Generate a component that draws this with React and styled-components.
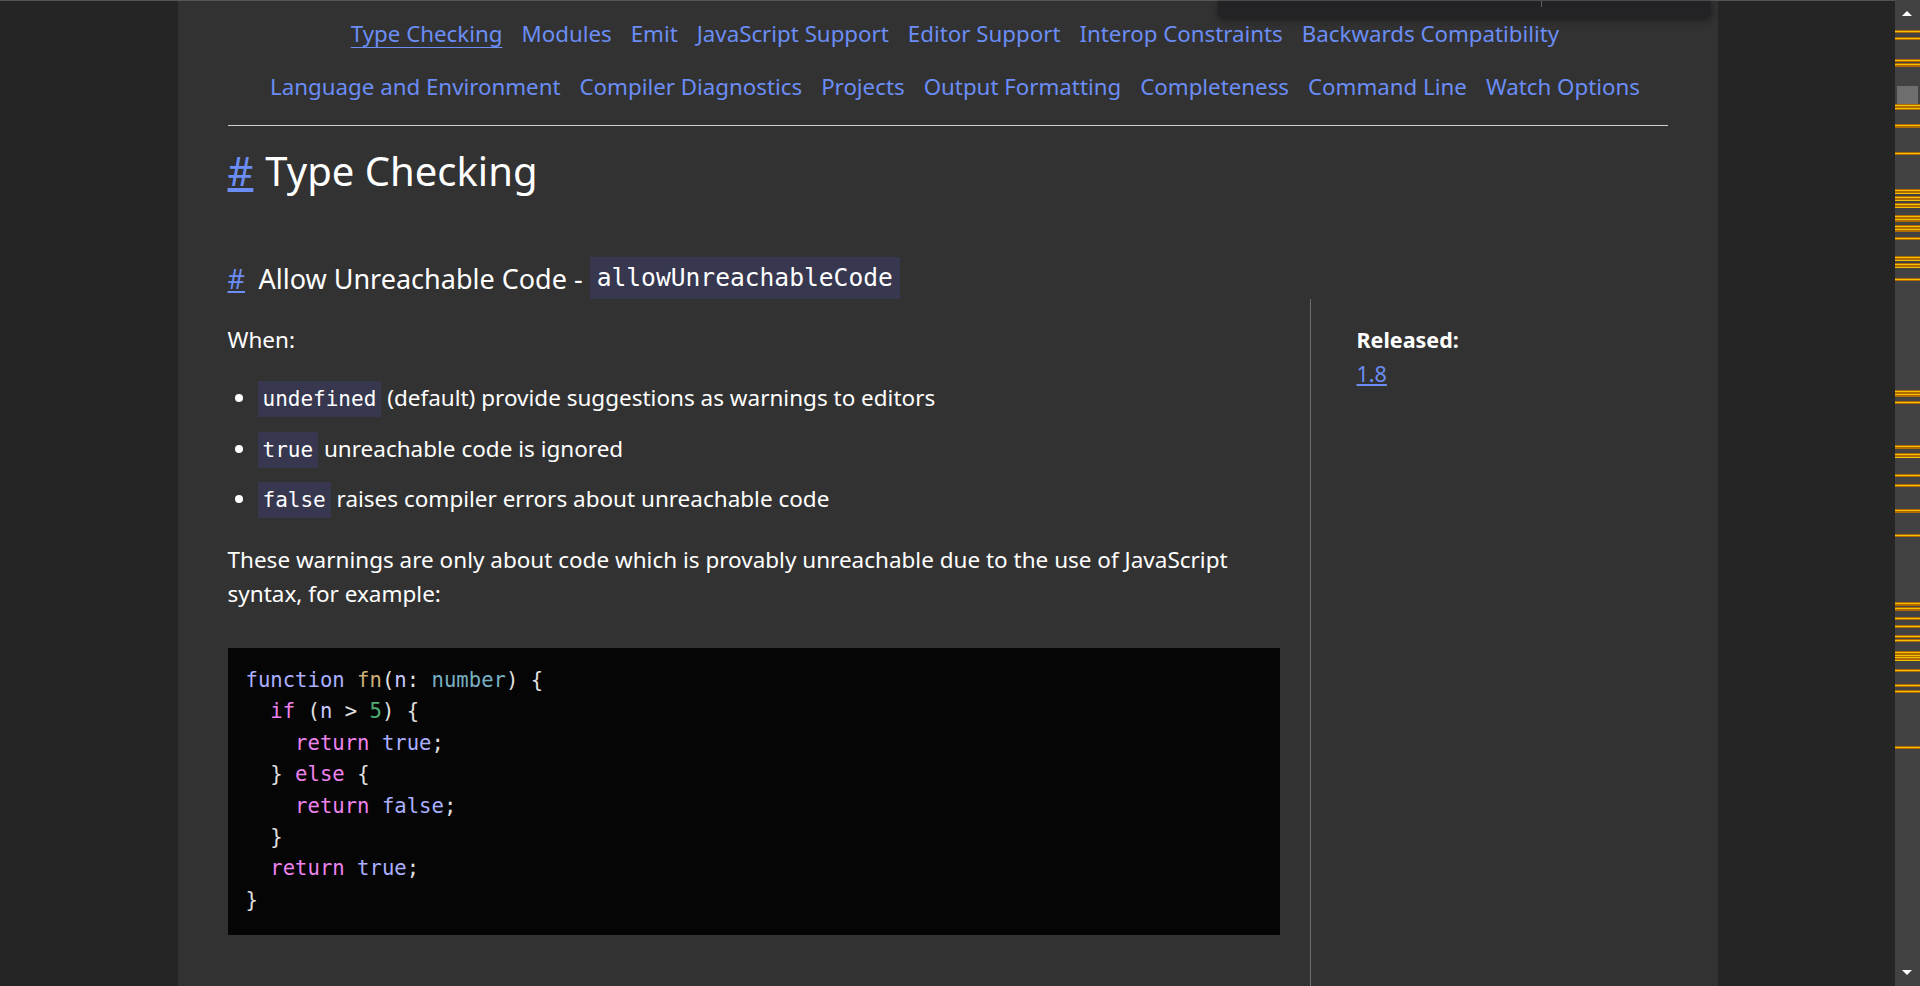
import styled, { createGlobalStyle } from "styled-components";

const GlobalStyle = createGlobalStyle`
  html, body {
    margin: 0;
    padding: 0;
    height: 100%;
    overflow: hidden;
    background-color: #252525;
  }
  body {
    font-family: "Noto Sans", "Open Sans", sans-serif;
    color: #ffffff;
  }
  * {
    box-sizing: border-box;
  }
`;

const navRows = [
  [
    "Type Checking",
    "Modules",
    "Emit",
    "JavaScript Support",
    "Editor Support",
    "Interop Constraints",
    "Backwards Compatibility",
  ],
  [
    "Language and Environment",
    "Compiler Diagnostics",
    "Projects",
    "Output Formatting",
    "Completeness",
    "Command Line",
    "Watch Options",
  ],
];

// scrollbar search markers: [top, height]
const markers = [
  [30, 3], [37, 3], [59, 3], [63, 4], [104, 6], [124, 4], [152, 3],
  [189, 5], [196, 5], [203, 5], [215, 7], [225, 7], [237, 3], [256, 5],
  [263, 5], [278, 3], [390, 7], [401, 3], [445, 4], [453, 5], [474, 3],
  [484, 3], [509, 4], [534, 3], [602, 4], [607, 4], [617, 3], [625, 3],
  [635, 3], [639, 3], [651, 7], [656, 5], [669, 3], [684, 3], [690, 3],
  [746, 3],
];

const App = () => {
  return (
    <>
      <GlobalStyle />
      <Page>
        <Viewport>
          <Main>
            <Nav>
              {navRows.map((row, i) => (
                <NavRow key={i}>
                  {row.map((item) => (
                    <NavLink key={item} $active={item === "Type Checking"}>
                      {item}
                    </NavLink>
                  ))}
                </NavRow>
              ))}
            </Nav>
            <Rule />
            <H1>
              <Anchor>#</Anchor>
              <span>Type Checking</span>
            </H1>
            <H2>
              <Anchor>#</Anchor>
              <span>Allow Unreachable Code - </span>
              <HeadCode>allowUnreachableCode</HeadCode>
            </H2>
            <Section>
              <Body>
                <Para>When:</Para>
                <List>
                  <Item>
                    <Code>undefined</Code> (default) provide suggestions as warnings to editors
                  </Item>
                  <Item>
                    <Code>true</Code> unreachable code is ignored
                  </Item>
                  <Item>
                    <Code>false</Code> raises compiler errors about unreachable code
                  </Item>
                </List>
                <Para>
                  These warnings are only about code which is provably unreachable due to the use of JavaScript
                  syntax, for example:
                </Para>
                <Pre>
                  <Line>
                    <Tok $c="#aab0ff">function</Tok> <Tok $c="#cdb077">fn</Tok>(<Tok $c="#c9c9ff">n</Tok>: <Tok $c="#79b0c2">number</Tok>) {"{"}
                  </Line>
                  <Line $indent={1}>
                    <Tok $c="#ee82ee">if</Tok> (<Tok $c="#c9c9ff">n</Tok> &gt; <Tok $c="#4fae72">5</Tok>) {"{"}
                  </Line>
                  <Line $indent={2}>
                    <Tok $c="#ee82ee">return</Tok> <Tok $c="#aab0ff">true</Tok>;
                  </Line>
                  <Line $indent={1}>
                    {"} "}<Tok $c="#ee82ee">else</Tok> {"{"}
                  </Line>
                  <Line $indent={2}>
                    <Tok $c="#ee82ee">return</Tok> <Tok $c="#aab0ff">false</Tok>;
                  </Line>
                  <Line $indent={1}>{"}"}</Line>
                  <Line $indent={1}>
                    <Tok $c="#ee82ee">return</Tok> <Tok $c="#aab0ff">true</Tok>;
                  </Line>
                  <Line>{"}"}</Line>
                </Pre>
              </Body>
              <Aside>
                <Label>Released:</Label>
                <Version>1.8</Version>
              </Aside>
            </Section>
          </Main>
          <FindWidget>
            <FindDivider />
          </FindWidget>
        </Viewport>
        <Scrollbar>
          <ArrowUp />
          <Thumb />
          {markers.map(([top, h], i) => (
            <Marker key={i} $top={top} $h={h} />
          ))}
          <ArrowDown />
        </Scrollbar>
      </Page>
    </>
  );
};

export default App;

const Page = styled.div`
  display: flex;
  width: 100vw;
  height: 100vh;
  overflow: hidden;
`;

const Viewport = styled.div`
  position: relative;
  flex: 1;
  display: flex;
  justify-content: center;
  border-top: 1px solid #555555;
  background-color: #252525;
`;

const Main = styled.main`
  display: flex;
  flex-direction: column;
  width: 1540px;
  height: 100%;
  padding: 0 50px;
  background-color: #323232;
`;

const Nav = styled.nav`
  padding: 6px 0 0 15px;
`;

const NavRow = styled.div`
  display: flex;
  justify-content: center;
  gap: 19px;
  height: 53px;
  align-items: center;
`;

const NavLink = styled.a`
  font-size: 22.3px;
  color: #6b8df5;
  text-decoration: ${({ $active }) => ($active ? "underline" : "none")};
  text-underline-offset: 5px;
  text-decoration-thickness: 1px;
  cursor: pointer;
`;

const Rule = styled.hr`
  width: 100%;
  margin: 12px 0 0;
  border: none;
  border-top: 1px solid #d0d0d0;
`;

const Anchor = styled.a`
  color: #6b8df5;
  text-decoration: underline;
  margin-right: 0.3em;
`;

const H1 = styled.h1`
  margin: 20px 0 0;
  font-size: 40px;
  font-weight: 400;
  line-height: 50px;
`;

const H2 = styled.h2`
  display: flex;
  align-items: center;
  margin: 61px 0 0;
  font-size: 27px;
  font-weight: 400;
  height: 42px;
  white-space: pre;
  & > ${Anchor} {
    margin-right: 0.5em;
  }
`;

const HeadCode = styled.code`
  font-family: "DejaVu Sans Mono", "Liberation Mono", monospace;
  font-size: 24.6px;
  line-height: 42px;
  padding: 0 7px;
  background-color: #37374f;
`;

const Section = styled.div`
  flex: 1;
  display: grid;
  grid-template-columns: 1052px 1fr;
  column-gap: 30px;
`;

const Body = styled.div`
  padding-top: 24px;
`;

const Para = styled.p`
  margin: 0;
  font-size: 22.5px;
  line-height: 34px;
`;

const List = styled.ul`
  margin: 24px 0 27px;
  padding-left: 30px;
`;

const Item = styled.li`
  font-size: 22.5px;
  line-height: 34px;
  & + & {
    margin-top: 16.5px;
  }
`;

const Code = styled.code`
  font-family: "DejaVu Sans Mono", "Liberation Mono", monospace;
  font-size: 21px;
  line-height: 1;
  padding: 6px 5px;
  background-color: #37374f;
`;

const Pre = styled.pre`
  margin: 37px 0 0;
  padding: 17px 18px 19px;
  background-color: #050505;
  font-family: "DejaVu Sans Mono", "Liberation Mono", monospace;
  font-size: 20.6px;
  color: #e0e0e0;
`;

const Line = styled.div`
  line-height: 31.4px;
  padding-left: ${({ $indent }) => ($indent || 0) * 2}ch;
`;

const Tok = styled.span`
  color: ${({ $c }) => $c};
`;

const Aside = styled.aside`
  border-left: 1px solid #6e6e6e;
  padding: 24px 0 0 46px;
`;

const Label = styled.div`
  font-size: 21.5px;
  font-weight: 700;
  line-height: 34px;
`;

const Version = styled.a`
  font-size: 21.5px;
  line-height: 34px;
  color: #6b8df5;
  text-decoration: underline;
`;

const FindWidget = styled.div`
  position: absolute;
  top: 0;
  right: 184px;
  width: 493px;
  height: 17px;
  background-color: #232325;
  border-radius: 0 0 6px 6px;
  box-shadow: 0 2px 8px rgba(0, 0, 0, 0.45);
`;

const FindDivider = styled.div`
  position: absolute;
  left: 323px;
  top: 0;
  width: 1px;
  height: 6px;
  background-color: #5a5a5a;
`;

const Scrollbar = styled.div`
  position: relative;
  width: 25px;
  height: 100%;
  background-color: #424242;
`;

const ArrowUp = styled.div`
  position: absolute;
  top: 11px;
  left: 7px;
  width: 0;
  height: 0;
  border-left: 5px solid transparent;
  border-right: 5px solid transparent;
  border-bottom: 5px solid #ffffff;
`;

const ArrowDown = styled.div`
  position: absolute;
  bottom: 11px;
  left: 7px;
  width: 0;
  height: 0;
  border-left: 5px solid transparent;
  border-right: 5px solid transparent;
  border-top: 5px solid #ffffff;
`;

const Thumb = styled.div`
  position: absolute;
  top: 86px;
  left: 2px;
  width: 21px;
  height: 24px;
  background-color: rgba(140, 140, 140, 0.6);
`;

const Marker = styled.div`
  position: absolute;
  left: 0;
  right: 0;
  top: ${({ $top }) => $top}px;
  height: ${({ $h }) => $h}px;
  background: repeating-linear-gradient(
    to bottom,
    #b06a00 0px,
    #b06a00 1px,
    #f2c200 1px,
    #f2c200 2px,
    #b06a00 2px,
    #b06a00 3px
  );
`;
